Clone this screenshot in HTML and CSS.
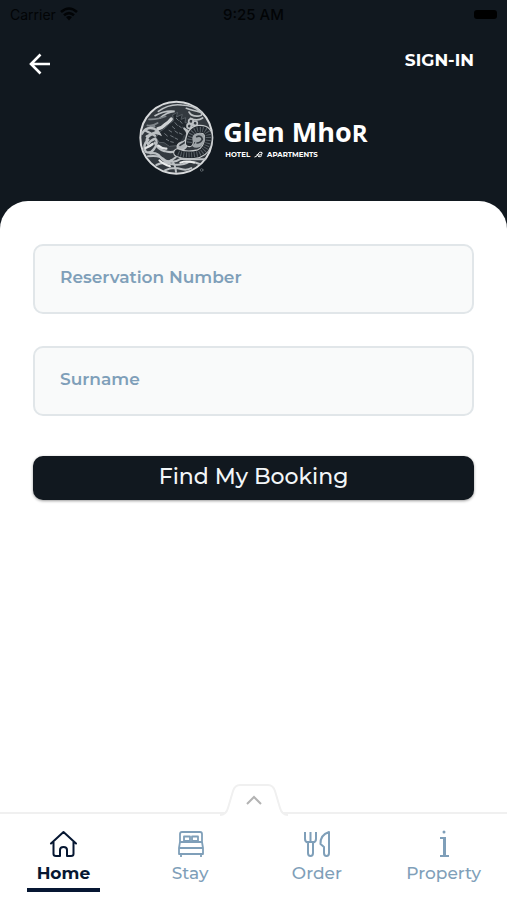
FILE: index.html
```html
<!DOCTYPE html>
<html lang="en">
<head>
<meta charset="UTF-8" />
<meta name="viewport" content="width=device-width, initial-scale=1" />
<title>Glen Mhor - Find My Booking</title>
<link rel="stylesheet" href="styles.css">
</head>
<body>

<header class="header">
  <div class="status-bar">
    <span class="carrier">Carrier
      <svg width="18" height="14" viewBox="0 0 18 14" fill="none" stroke="currentColor" stroke-width="2.6" aria-hidden="true">
        <path d="M1 5 Q9 -2 17 5M4 8.3 Q9 4 14 8.3" />
        <path d="M6 10 Q9 7.8 12 10 L9 13.5Z" fill="currentColor" stroke="none" />
      </svg>
    </span>
    <span class="time">9:25 AM</span>
    <span class="battery"><i></i></span>
  </div>

  <div class="top-bar">
    <button class="back" type="button" aria-label="Back">
      <svg width="22" height="22" viewBox="0 0 22 22" fill="none" stroke="currentColor" stroke-width="2.6" aria-hidden="true">
        <path d="M22 11H3M12.5 1.5L3 11l9.5 9.5" />
      </svg>
    </button>
    <a class="sign-in" href="#">SIGN-IN</a>
  </div>

  <div class="logo">
    <svg class="emblem" width="76" height="76" viewBox="0 0 228 228" fill="none" stroke="#bcc0c3" stroke-width="5" stroke-linecap="round" aria-hidden="true">
      <circle cx="112" cy="113" r="108" fill="#33393f" stroke="#d8dadc" stroke-width="6" />
      <!-- clouds -->
      <path d="M58 34Q92 10 128 15Q162 15 188 38Q157 30 142 25M48 47Q78 30 107 34Q82 37 63 54M150 36Q158 51 181 48Q195 45 184 36M154 55Q176 65 191 54" />
      <path d="M30 58Q58 59 80 49M25 76Q41 79 56 69M20 89Q34 80 47 79" stroke="#80868b" />
      <path d="M57 86Q69 84 79 73Q91 66 97 57" stroke="#cfd2d4" stroke-width="10" />
      <!-- head and mane -->
      <path d="M102 44L116 37L112 51L130 43L126 58L140 53L138 68L150 69L144 84L149 98L136 108L129 124L112 137L91 139L75 128L60 127L51 112L64 94L79 84L90 72L103 63Z" fill="#20262c" stroke="#555c62" stroke-width="3" />
      <path d="M112 55l6 6M123 63l6 7M108 68l7 8M120 78l7 5M131 82l8 6M100 80l7 6M90 91l8 5M108 93l8 6M121 99l8 4M77 101l8 7M95 107l8 4M108 114l8 4M82 118l7 4M95 125l8 2" stroke="#6f767c" stroke-width="3" />
      <!-- fore leg and leaf -->
      <path d="M9 101Q22 78 45 86Q57 91 62 102Q44 94 29 109Q18 120 27 133Q34 121 49 116Q59 127 45 147Q34 163 20 155Q9 135 28 119" stroke-width="7" />
      <path d="M18 91L48 107M23 109L54 95M47 128Q58 149 76 153Q97 160 111 152M34 160Q55 156 64 171Q77 190 95 183" stroke-width="7" />
      <path d="M20 144Q31 140 41 132M58 137Q70 147 82 146" stroke="#e2e4e5" stroke-width="7" />
      <!-- flower -->
      <circle cx="156" cy="64" r="7" /><circle cx="168" cy="70" r="7" />
      <circle cx="151" cy="78" r="7" /><circle cx="163" cy="82" r="7" />
      <path d="M158 91Q157 104 147 112M160 100Q174 91 190 91" />
      <!-- belly -->
      <path d="M134 84Q149 97 142 113Q139 124 127 127Q111 133 116 145Q126 157 140 143Q149 133 151 119Q159 104 145 91Z" fill="#aeb3b7" />
      <path d="M123 136L139 126M135 109Q137 119 129 121" stroke="#343b41" />
      <!-- coiled tail -->
      <path d="M151 128Q154 91 180 88Q211 86 208 118Q205 151 179 161Q142 170 116 158" stroke="#c4c8ca" stroke-width="27" />
      <path d="M151 128Q154 91 180 88Q211 86 208 118Q205 151 179 161Q142 170 116 158" stroke="#20262c" stroke-width="20" />
      <path d="M151 128Q154 91 180 88Q211 86 208 118Q205 151 179 161Q142 170 116 158" stroke="#596167" stroke-width="16" stroke-linecap="butt" stroke-dasharray="3 5" />
      <path d="M164 125Q158 107 173 102Q191 99 196 113Q196 129 182 139Q169 144 162 137Q174 131 171 120Z" fill="#9fa5a9" stroke="#9fa5a9" />
      <path d="M173 110Q187 105 190 118Q184 129 174 129" stroke="#31383e" stroke-width="5" />
      <!-- water -->
      <path d="M27 169Q64 164 79 181Q104 192 126 176Q164 178 199 178M52 195Q73 184 94 192Q128 199 151 185Q165 184 181 192M78 211Q101 200 126 207Q145 212 157 204M96 180Q109 190 111 216M110 172Q94 186 73 188" stroke-width="6" />
      <path d="M61 181Q74 194 93 199M124 188Q143 181 165 188" stroke="#eceded" stroke-width="6" />
      <circle cx="188" cy="210" r="4" stroke="#747b80" stroke-width="2" />
    </svg>
    <div class="brand">
      <span class="brand-name">Glen Mho<small>R</small></span>
      <span class="brand-sub">HOTEL
        <svg width="9" height="7" viewBox="0 0 18 14" fill="none" stroke="currentColor" stroke-width="2" aria-hidden="true">
          <path d="M1 12Q6 12 8 6Q11 0 16 3Q18 7 12 8H5M8 11Q13 13 16 9" />
        </svg>
        APARTMENTS</span>
    </div>
  </div>
</header>

<main class="sheet">
  <form class="booking-form">
    <input class="field" type="text" name="reservation" placeholder="Reservation Number" aria-label="Reservation Number" />
    <input class="field" type="text" name="surname" placeholder="Surname" aria-label="Surname" />
    <button class="submit" type="submit">Find My Booking</button>
  </form>
</main>

<nav class="tabs">
  <button class="expand" type="button" aria-label="Expand menu">
    <svg width="68" height="32" viewBox="0 0 68 32" fill="none" aria-hidden="true">
      <path d="M0 31Q6 31 8 24L13 7Q15 1 20 1H48Q53 1 55 7L60 24Q62 31 68 31V32H0Z" fill="#fff" />
      <path d="M0 31Q6 31 8 24L13 7Q15 1 20 1H48Q53 1 55 7L60 24Q62 31 68 31" stroke="#f0f0f0" stroke-width="2" />
      <path d="M27 20L34 13L41 20" stroke="#b3b3b3" stroke-width="2" />
    </svg>
  </button>
  <a class="tab active" href="#">
    <svg width="28" height="28" viewBox="0 0 28 28" fill="none" stroke="currentColor" stroke-width="2" stroke-linejoin="round" stroke-linecap="round" aria-hidden="true">
      <path d="M2 13.5L14.5 2L27 13.5M4.5 12V24Q4.5 26 7 26H11V20Q11 17 14.5 17Q18 17 18 20V26H22Q24.5 26 24.5 24V12" />
    </svg>
    <span>Home</span>
  </a>
  <a class="tab" href="#">
    <svg width="28" height="28" viewBox="0 0 28 28" fill="none" stroke="currentColor" stroke-width="1.8" stroke-linejoin="round" aria-hidden="true">
      <path d="M4 12V4Q4 2 6 2H24Q26 2 26 4V12M4 12L3 18V24H27V18L26 12M4 12H26M3 18H27M5 24V27M25 24V27M8 6.500H14V11H8ZM16 6.500H22V11H16Z" />
    </svg>
    <span>Stay</span>
  </a>
  <a class="tab" href="#">
    <svg width="28" height="28" viewBox="0 0 28 28" fill="none" stroke="currentColor" stroke-width="2" stroke-linejoin="round" aria-hidden="true">
      <path d="M2 2V9Q2 12 5 12.5V23Q5 26 7.500 26Q10 26 10 23V12.5Q13 12 13 9V2M7.500 2V12M3 12H12M26 2V23Q26 26 23.5 26Q21 26 21 23V17L17.500 14Q17 5 26 2Z" />
    </svg>
    <span>Order</span>
  </a>
  <a class="tab" href="#">
    <svg width="28" height="28" viewBox="0 0 28 28" fill="none" stroke="currentColor" stroke-width="2" aria-hidden="true">
      <path d="M10 8H15M10 26H19" />
      <path d="M14.5 7V26" stroke-width="3" />
      <circle cx="14" cy="2" r="1.500" fill="currentColor" stroke="none" />
    </svg>
    <span>Property</span>
  </a>
</nav>

</body>
</html>
```
FILE: styles.css
```css
* { box-sizing: border-box; }
body {
  margin: 0;
  min-height: 100vh;
  display: flex;
  flex-direction: column;
  background: #11181f;
  font-family: Montserrat, Inter, sans-serif;
}
button { font-family: inherit; cursor: pointer; }
a { text-decoration: none; }
svg { display: block; }

.header { color: #fff; padding-bottom: 25px; }
.status-bar {
  display: grid;
  grid-template-columns: 1fr auto 1fr;
  align-items: center;
  height: 28px;
  padding: 0 10px;
  color: #020406;
  font-family: Inter, sans-serif;
  font-size: 15px;
}
.carrier { display: flex; align-items: center; gap: 4px; font-size: 14px; }
.time { font-weight: 500; }
.battery { justify-self: end; }
.battery i { display: block; width: 23px; height: 9px; border-radius: 3px; background: #000; }

.top-bar {
  display: flex;
  justify-content: space-between;
  align-items: center;
  height: 72px;
  padding: 0 33px 8px 28px;
}
.back { padding: 8px 0 0; border: 0; background: none; color: #fff; }
.sign-in { color: #fff; font-size: 17px; font-weight: 700; }

.logo { display: flex; justify-content: center; align-items: center; gap: 8px; }
.brand { display: flex; flex-direction: column; padding-bottom: 4px; }
.brand-name { font-family: "Open Sans", sans-serif; font-size: 27px; line-height: 36px; font-weight: 700; }
.brand-name small { font-size: 24px; }
.brand-sub { display: flex; align-items: center; gap: 4px; padding-left: 2px; font-size: 7px; line-height: 8px; font-weight: 700; }

.sheet {
  flex: 1;
  padding: 43px 33px;
  border-radius: 28px 28px 0 0;
  background: #fff;
}
.booking-form { display: flex; flex-direction: column; }
.field {
  width: 100%;
  height: 70px;
  margin-bottom: 32px;
  padding: 0 25px 5px;
  border: 2px solid #e1e6e9;
  border-radius: 10px;
  background: #f9fafa;
  color: #11181f;
  font-family: inherit;
  font-size: 17px;
  font-weight: 600;
}
.field::placeholder { color: #7f9fb9; opacity: 1; }
.submit {
  height: 44px;
  margin-top: 8px;
  padding: 0 0 3px;
  border: 0;
  border-radius: 10px;
  background: #11181f;
  box-shadow: 0 1px 3px rgba(0, 0, 0, 0.4);
  color: #f3f6f8;
  font-size: 22px;
  font-weight: 500;
}

.tabs {
  position: relative;
  display: grid;
  grid-template-columns: repeat(4, 1fr);
  height: 88px;
  padding-top: 16px;
  border-top: 2px solid #f0f0f0;
  background: #fff;
}
.expand {
  position: absolute;
  bottom: 100%;
  left: 50%;
  margin: 0 0 -2px -34px;
  padding: 0;
  border: 0;
  background: none;
}
.tab {
  display: flex;
  flex-direction: column;
  align-items: center;
  gap: 4px;
  color: #7f9fb9;
  font-size: 17px;
  line-height: 22px;
  font-weight: 500;
}
.active { color: #061732; font-weight: 700; }
.active::after { content: ""; width: 73px; height: 4px; background: #061732; }
```
